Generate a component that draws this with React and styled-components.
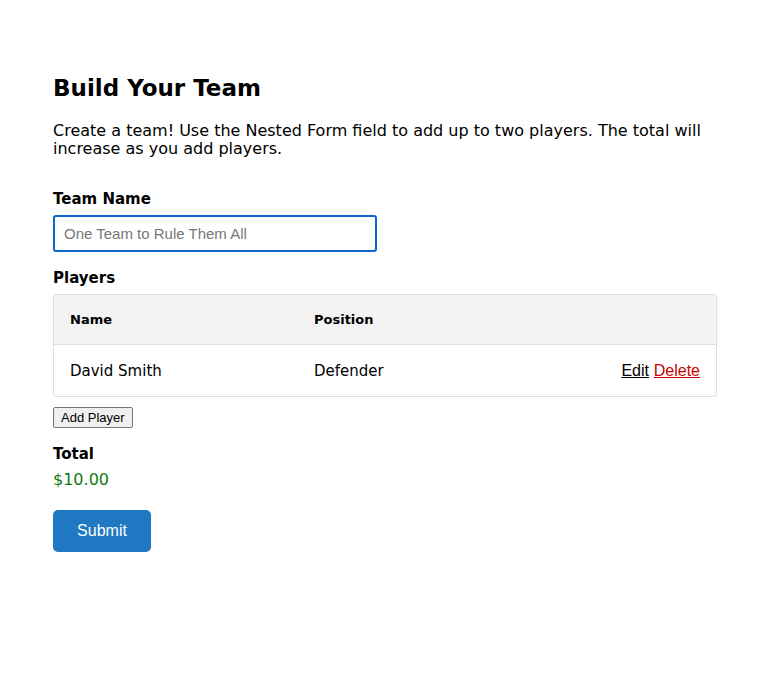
import React from 'react';
import styled, { createGlobalStyle } from 'styled-components';

const GlobalStyle = createGlobalStyle`
    html, body {
        margin: 0;
        padding: 0;
        background: #fff;
    }
    body {
        font-family: "DejaVu Sans", "Liberation Sans", sans-serif;
        color: #000;
    }
`;

const players = [
    { name: 'David Smith', position: 'Defender' },
];

const App = () => {
    return (
        <>
            <GlobalStyle />
            <Page>
                <Title>Build Your Team</Title>
                <Intro>
                    Create a team! Use the Nested Form field to add up to two players. The total will
                    increase as you add players.
                </Intro>

                <Field>
                    <Label htmlFor="team-name">Team Name</Label>
                    <TextInput id="team-name" placeholder="One Team to Rule Them All" />
                </Field>

                <Field>
                    <Label as="div">Players</Label>
                    <Table>
                        <thead>
                            <HeadRow>
                                <HeadCell $width="228px">Name</HeadCell>
                                <HeadCell>Position</HeadCell>
                                <HeadCell />
                            </HeadRow>
                        </thead>
                        <tbody>
                            {players.map(p => (
                                <tr key={p.name}>
                                    <Cell>{p.name}</Cell>
                                    <Cell>{p.position}</Cell>
                                    <ActionCell>
                                        <ActionLink href="#">Edit</ActionLink>{' '}
                                        <ActionLink href="#" $danger>Delete</ActionLink>
                                    </ActionCell>
                                </tr>
                            ))}
                        </tbody>
                    </Table>
                    <AddButton type="button">Add Player</AddButton>
                </Field>

                <Field>
                    <Label as="div">Total</Label>
                    <Price>$10.00</Price>
                </Field>

                <SubmitButton type="button">Submit</SubmitButton>
            </Page>
        </>
    );
};

const Page = styled.div`
    padding: 73px 53px 40px 53px;
    width: 664px;
`;

const Title = styled.h1`
    margin: 0 0 19px 0;
    font-size: 23px;
    font-weight: bold;
    line-height: 30px;
`;

const Intro = styled.p`
    margin: 0 0 31px 0;
    font-size: 16px;
    line-height: 18px;
`;

const Field = styled.div`
    display: flex;
    flex-direction: column;
    align-items: flex-start;
    margin-bottom: 16px;
`;

const Label = styled.label`
    font-size: 15px;
    font-weight: bold;
    line-height: 20px;
    margin-bottom: 6px;
`;

const TextInput = styled.input`
    box-sizing: border-box;
    width: 324px;
    height: 37px;
    padding: 0 9px;
    border: 2px solid #0b66d0;
    border-radius: 3px;
    font-family: "Liberation Sans", Arial, sans-serif;
    font-size: 15px;
    color: #333;
    outline: none;

    &::placeholder {
        color: #777;
    }
`;

const Table = styled.table`
    width: 664px;
    border-collapse: separate;
    border-spacing: 0;
    border: 1px solid #dedede;
    border-radius: 3px;
    margin-bottom: 10px;
`;

const HeadRow = styled.tr`
    background: #f3f3f3;
`;

const HeadCell = styled.th`
    text-align: left;
    font-size: 13px;
    font-weight: bold;
    height: 49px;
    padding: 0 0 0 16px;
    border-bottom: 1px solid #dedede;
    width: ${p => p.$width || 'auto'};
`;

const Cell = styled.td`
    font-size: 15px;
    height: 51px;
    padding: 0 0 0 16px;
`;

const ActionCell = styled(Cell)`
    text-align: right;
    padding-right: 16px;
`;

const ActionLink = styled.a`
    font-family: "Liberation Sans", Arial, sans-serif;
    font-size: 16px;
    color: ${p => (p.$danger ? '#cc0000' : '#000')};
    text-decoration: underline;
`;

const AddButton = styled.button`
    font-family: "Liberation Sans", Arial, sans-serif;
    font-size: 13px;
    height: 21px;
    padding: 0 7px;
    background: #efefef;
    border: 1px solid #767676;
    border-radius: 2px;
    color: #000;
`;

const Price = styled.div`
    font-size: 16px;
    color: #137a13;
    line-height: 20px;
`;

const SubmitButton = styled.button`
    width: 98px;
    height: 42px;
    margin-top: 4px;
    background: #1f78c1;
    color: #fff;
    border: none;
    border-radius: 5px;
    font-family: "Liberation Sans", Arial, sans-serif;
    font-size: 16px;
`;

export default App;
